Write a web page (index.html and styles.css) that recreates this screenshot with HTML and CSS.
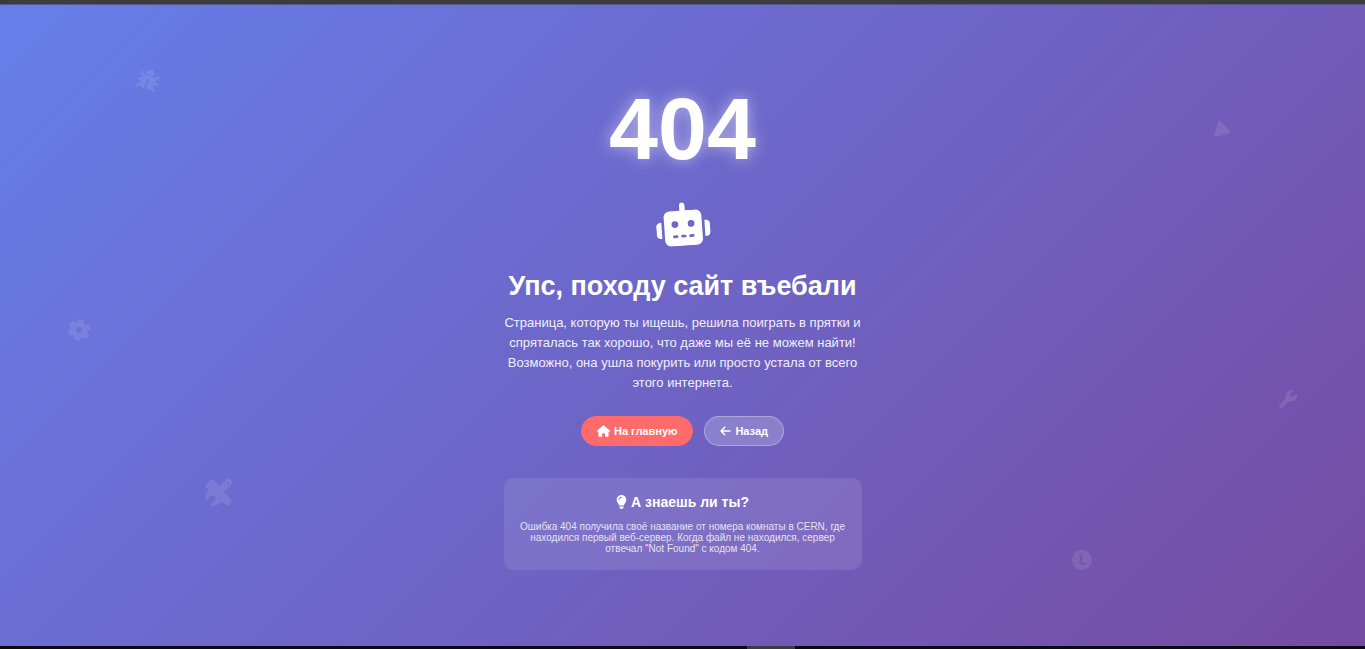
FILE: index.html
```
<!DOCTYPE html>
<html lang="ru">
<head>
    <meta charset="UTF-8">
    <meta name="viewport" content="width=device-width, initial-scale=1.0">
    <title>404</title>
    <link rel="stylesheet" href="styles.css">
</head>
<body>
    <div class="top-strip"></div>
    <main class="page">
        <div class="floating-icons" aria-hidden="true">
            <svg class="float float-bug" viewBox="0 0 512 512">
                <path d="M256 0c53 0 96 43 96 96v4c0 16-12 28-28 28H188c-16 0-28-12-28-28v-4c0-53 43-96 96-96z"/>
                <path d="M150 150h212c38 0 54 26 54 60v110c0 84-56 152-136 160V240h-48v240c-80-8-136-76-136-160V210c0-34 16-60 54-60z"/>
                <path class="legs" d="M130 200L54 130M110 290H36M130 380l-76 72M382 200l76-70M402 290h74M382 380l76 72"/>
            </svg>
            <svg class="float float-gear" viewBox="0 0 512 512">
                <path fill-rule="evenodd" d="M204 18h104l18 72 48 28 72-22 52 90-54 50v40l54 50-52 90-72-22-48 28-18 72H204l-18-72-48-28-72 22-52-90 54-50v-40l-54-50 52-90 72 22 48-28zM256 176a80 80 0 1 0 0 160 80 80 0 1 0 0-160z"/>
            </svg>
            <svg class="float float-tools" viewBox="0 0 512 512">
                <path d="M78 5L5 78c-6 6-6 15-1 22l92 120c5 6 11 9 18 9h48l100 100c-14 30-9 66 15 90l85 85c11 11 29 11 40 0l100-100c11-11 11-29 0-40l-85-85c-24-24-60-29-90-15L227 164v-50c0-7-3-14-9-18L98 4c-6-5-15-5-20 1z"/>
                <path d="M352 320c88.4 0 160-71.6 160-160c0-15.3-2.2-30.1-6.2-44.2c-3.1-10.8-16.4-13.2-24.3-5.3l-76.8 76.8c-3 3-7.1 4.7-11.3 4.7H336c-8.8 0-16-7.2-16-16V118.6c0-4.2 1.7-8.3 4.7-11.3l76.8-76.8c7.9-7.9 5.4-21.2-5.3-24.3C382.1 2.2 367.3 0 352 0C263.6 0 192 71.6 192 160c0 19.1 3.4 37.5 9.5 54.5L19.9 396.1C7.2 408.8 0 426.1 0 444.1C0 481.6 30.4 512 67.9 512c18 0 35.3-7.2 48-19.9L297.5 310.5c17 6.2 35.4 9.5 54.5 9.5zM80 408a24 24 0 1 1 0 48 24 24 0 1 1 0-48z"/>
            </svg>
            <svg class="float float-triangle" viewBox="0 0 512 512">
                <path d="M256 32c14 0 27 7 35 20l216 368c7 12 7 27 0 40s-20 20-35 20H40c-14 0-28-8-35-20s-7-28 0-40L221 52c8-13 21-20 35-20z"/>
            </svg>
            <svg class="float float-wrench" viewBox="0 0 512 512">
                <path d="M352 320c88.4 0 160-71.6 160-160c0-15.3-2.2-30.1-6.2-44.2c-3.1-10.8-16.4-13.2-24.3-5.3l-76.8 76.8c-3 3-7.1 4.7-11.3 4.7H336c-8.8 0-16-7.2-16-16V118.6c0-4.2 1.7-8.3 4.7-11.3l76.8-76.8c7.9-7.9 5.4-21.2-5.3-24.3C382.1 2.2 367.3 0 352 0C263.6 0 192 71.6 192 160c0 19.1 3.4 37.5 9.5 54.5L19.9 396.1C7.2 408.8 0 426.1 0 444.1C0 481.6 30.4 512 67.9 512c18 0 35.3-7.2 48-19.9L297.5 310.5c17 6.2 35.4 9.5 54.5 9.5z"/>
            </svg>
            <svg class="float float-clock" viewBox="0 0 512 512">
                <path fill-rule="evenodd" d="M256 0a256 256 0 1 0 0 512 256 256 0 1 0 0-512zM190 130l44-20 44 130-40 62 70 36 46-30 16 34-66 56-134-68 44-90z"/>
            </svg>
        </div>

        <div class="container">
            <div class="error-code">404</div>
            <svg class="robot" viewBox="0 0 640 512" aria-hidden="true">
                <path d="M320 0c17.7 0 32 14.3 32 32V96H472c39.8 0 72 32.2 72 72V440c0 39.8-32.2 72-72 72H168c-39.8 0-72-32.2-72-72V168c0-39.8 32.2-72 72-72H288V32c0-17.7 14.3-32 32-32zM208 384c-8.8 0-16 7.2-16 16s7.2 16 16 16h32c8.8 0 16-7.2 16-16s-7.2-16-16-16H208zm96 0c-8.8 0-16 7.2-16 16s7.2 16 16 16h32c8.8 0 16-7.2 16-16s-7.2-16-16-16H304zm96 0c-8.8 0-16 7.2-16 16s7.2 16 16 16h32c8.8 0 16-7.2 16-16s-7.2-16-16-16H400zM264 256a40 40 0 1 0 -80 0 40 40 0 1 0 80 0zm152 40a40 40 0 1 0 0-80 40 40 0 1 0 0 80zM48 224H64V416H48c-26.5 0-48-21.5-48-48V272c0-26.5 21.5-48 48-48zm544 0c26.5 0 48 21.5 48 48v96c0 26.5-21.5 48-48 48H576V224h16z"/>
            </svg>
            <h1 class="title">Упс, походу сайт въебали</h1>
            <p class="message">Страница, которую ты ищешь, решила поиграть в прятки и спряталась так хорошо, что даже мы её не можем найти! Возможно, она ушла покурить или просто устала от всего этого интернета.</p>
            <div class="buttons">
                <a href="/" class="btn btn-primary">
                    <svg class="btn-icon-home" viewBox="0 0 576 512" aria-hidden="true"><path d="M575.8 255.5c0 18-15 32.1-32 32.1h-32l.7 160.2c0 2.7-.2 5.4-.5 8.1V472c0 22.1-17.9 40-40 40H456c-1.1 0-2.2 0-3.3-.1c-1.4 .1-2.8 .1-4.2 .1H416 392c-22.1 0-40-17.9-40-40V448 384c0-17.7-14.3-32-32-32H256c-17.7 0-32 14.3-32 32v64 24c0 22.1-17.9 40-40 40H160 128.1c-1.5 0-3-.1-4.5-.2c-1.2 .1-2.4 .2-3.6 .2H104c-22.1 0-40-17.9-40-40V360c0-.9 0-1.9 .1-2.8V287.6H32c-18 0-32-14-32-32.1c0-9 3-17 10-24L266.4 8c7-7 15-8 22-8s15 2 21 7L564.8 231.5c8 7 12 15 11 24z"/></svg>
                    На главную
                </a>
                <button type="button" class="btn btn-secondary">
                    <svg class="btn-icon-back" viewBox="0 0 448 512" aria-hidden="true"><path d="M9.4 233.4c-12.5 12.5-12.5 32.8 0 45.3l160 160c12.5 12.5 32.8 12.5 45.3 0s12.5-32.8 0-45.3L109.2 288 416 288c17.7 0 32-14.3 32-32s-14.3-32-32-32l-306.7 0L214.6 118.6c12.5-12.5 12.5-32.8 0-45.3s-32.8-12.5-45.3 0l-160 160z"/></svg>
                    Назад
                </button>
            </div>
            <section class="fact">
                <h2 class="fact-title">
                    <svg class="bulb" viewBox="0 0 384 512" aria-hidden="true"><path d="M272 384c9.6-31.9 29.5-59.1 49.2-86.2l0 0c5.2-7.1 10.4-14.2 15.4-21.4c19.8-28.5 31.4-63 31.4-100.3C368 78.8 289.2 0 192 0S16 78.8 16 176c0 37.3 11.6 71.9 31.4 100.3c5 7.2 10.2 14.3 15.4 21.4l0 0c19.8 27.1 39.7 54.4 49.2 86.2H272zM192 512c44.2 0 80-35.8 80-80V416H112v16c0 44.2 35.8 80 80 80zM112 176c0 8.8-7.2 16-16 16s-16-7.2-16-16c0-61.9 50.1-112 112-112c8.8 0 16 7.2 16 16s-7.2 16-16 16c-44.2 0-80 35.8-80 80z"/></svg>
                    А знаешь ли ты?
                </h2>
                <p class="fact-text">Ошибка 404 получила своё название от номера комнаты в CERN, где находился первый веб-сервер. Когда файл не находился, сервер отвечал "Not Found" с кодом 404.</p>
            </section>
        </div>
    </main>
    <div class="bottom-strip"><div class="handle"></div></div>
</body>
</html>
```
FILE: styles.css
```
* {
    margin: 0;
    padding: 0;
    box-sizing: border-box;
}
body {
    display: flex;
    flex-direction: column;
    min-height: 100vh;
    font-family: "Liberation Sans", Arial, sans-serif;
    color: #fff;
    background: #0c0814;
}
svg {
    fill: currentColor;
}
.top-strip {
    height: 5px;
    background: #3c3c3c;
    border-bottom: 1px solid #55598a;
}
.page {
    position: relative;
    flex: 1;
    display: flex;
    align-items: center;
    justify-content: center;
    padding-top: 2px;
    overflow: hidden;
    background: linear-gradient(135deg, #667eea 0%, #764ba2 100%);
}
.bottom-strip {
    display: flex;
    justify-content: center;
    height: 3px;
    padding-left: 177px;
}
.handle {
    width: 48px;
    background: #3c3c3c;
}

/* background icons */
.float {
    position: absolute;
    width: 20px;
    height: 20px;
    opacity: 0.1;
}
.float-bug {
    top: 10%;
    left: 10%;
    width: 22px;
    height: 22px;
    transform: rotate(20deg);
}
.legs {
    fill: none;
    stroke: currentColor;
    stroke-width: 64;
    stroke-linecap: round;
}
.float-gear {
    top: 49%;
    left: 5%;
    width: 22px;
    height: 22px;
    transform: rotate(12deg);
}
.float-gear path {
    stroke: currentColor;
    stroke-width: 24;
    stroke-linejoin: round;
}
.float-tools {
    top: 74%;
    left: 15%;
    width: 27px;
    height: 27px;
    transform: rotate(180deg);
}
.float-triangle {
    top: 18%;
    right: 10%;
    width: 16px;
    height: 16px;
    transform: rotate(-14deg);
}
.float-triangle path {
    stroke: currentColor;
    stroke-width: 20;
}
.float-wrench {
    top: 60%;
    right: 5%;
    width: 18px;
    height: 18px;
}
.float-clock {
    top: 85%;
    right: 20%;
}

.container {
    position: relative;
    display: flex;
    flex-direction: column;
    align-items: center;
    width: 100%;
    max-width: 358px;
    text-align: center;
}
.error-code {
    margin-bottom: 28px;
    font-size: 88px;
    font-weight: bold;
    line-height: 90px;
    text-shadow: 0 0 16px rgba(255, 255, 255, 0.5);
}
.robot {
    width: 54px;
    height: 44px;
    margin-bottom: 24px;
    transform: rotate(-4deg);
}
.title {
    margin-bottom: 11px;
    font-size: 27px;
    line-height: 32px;
    white-space: nowrap;
}
.message {
    margin-bottom: 23px;
    font-size: 13px;
    line-height: 20px;
    opacity: 0.9;
}
.buttons {
    display: flex;
    gap: 11px;
    margin-bottom: 32px;
}
.btn {
    display: flex;
    align-items: center;
    gap: 4px;
    height: 30px;
    padding: 0 15px;
    border: 1px solid transparent;
    border-radius: 15px;
    color: #fff;
    font-family: inherit;
    font-size: 11px;
    font-weight: bold;
    text-decoration: none;
    cursor: pointer;
}
.btn-primary {
    background: #ff6b6b;
    border-color: #ff6b6b;
}
.btn-secondary {
    background: rgba(255, 255, 255, 0.2);
    border-color: rgba(255, 255, 255, 0.3);
}
.btn-icon-home {
    width: 13px;
    height: 12px;
}
.btn-icon-back {
    width: 11px;
    height: 12px;
}
.fact {
    width: 100%;
    padding: 16px 12px;
    border-radius: 10px;
    background: rgba(255, 255, 255, 0.1);
}
.fact-title {
    display: flex;
    align-items: center;
    justify-content: center;
    gap: 4px;
    margin-bottom: 11px;
    font-size: 14px;
    line-height: 16px;
}
.bulb {
    width: 11px;
    height: 14px;
}
.fact-text {
    font-size: 10px;
    line-height: 11px;
    opacity: 0.8;
}
```
